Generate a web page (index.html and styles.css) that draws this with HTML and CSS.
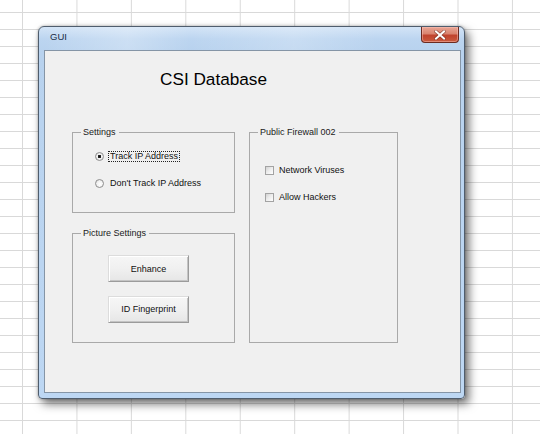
FILE: index.html
```html
<!DOCTYPE html>
<html>
<head>
<meta charset="utf-8">
<link rel="stylesheet" href="styles.css">
</head>
<body>
<div class="window">
  <div class="titlebar">
    <span class="title">GUI</span>
    <span class="close">
      <svg width="12" height="10" viewBox="0 0 12 10">
        <path d="M2 1.5 L10 8.5 M10 1.5 L2 8.5" stroke="#5a1d14" stroke-width="3.4" stroke-linecap="square" fill="none" opacity="0.55"/>
        <path d="M2 1.5 L10 8.5 M10 1.5 L2 8.5" stroke="#ffffff" stroke-width="2" stroke-linecap="square" fill="none"/>
      </svg>
    </span>
  </div>
  <div class="panel">
    <h1 class="heading">CSI Database</h1>
    <div class="groups">
      <fieldset class="group settings">
        <legend>Settings</legend>
        <label class="option first">
          <input type="radio" name="track" class="radio" checked>
          <span class="text focused">Track IP Address</span>
        </label>
        <label class="option second">
          <input type="radio" name="track" class="radio">
          <span class="text">Don't Track IP Address</span>
        </label>
      </fieldset>
      <fieldset class="group firewall">
        <legend>Public Firewall 002</legend>
        <label class="check first">
          <input type="checkbox" class="box">
          <span class="ctext">Network Viruses</span>
        </label>
        <label class="check second">
          <input type="checkbox" class="box">
          <span class="ctext">Allow Hackers</span>
        </label>
      </fieldset>
      <fieldset class="group picture">
        <legend>Picture Settings</legend>
        <button class="btn first">Enhance</button>
        <button class="btn second">ID Fingerprint</button>
      </fieldset>
    </div>
  </div>
</div>
</body>
</html>
```

FILE: styles.css
```css
html, body {
  margin: 0;
  padding: 0;
}
body {
  width: 540px;
  height: 434px;
  overflow: hidden;
  background-color: #ffffff;
  background-image:
    linear-gradient(to right, #d9d9d9 1px, transparent 1px),
    linear-gradient(to bottom, #d9d9d9 1px, transparent 1px);
  background-size: 54.44px 17px;
  background-position: 22px 12px;
  font-family: "Liberation Sans", Arial, sans-serif;
  color: #111;
}
.window {
  margin: 26px 0 0 38px;
  width: 427px;
  height: 373px;
  box-sizing: border-box;
  border: 1px solid #4f5d6d;
  border-radius: 6px 6px 4px 4px;
  padding: 0 3px 5px 5px;
  display: flex;
  flex-direction: column;
  background: linear-gradient(to bottom, #d3e4f6 0px, #bcd5f0 12px, #b8d2ee 24px, #bdd7f3 100%);
  box-shadow: 4px 5px 10px rgba(0, 0, 0, 0.55), 0 0 3px rgba(0, 0, 0, 0.3);
}
.titlebar {
  height: 23px;
  display: flex;
  align-items: flex-start;
  background: linear-gradient(to right, rgba(255,255,255,0) 0%, rgba(255,255,255,0.25) 20%, rgba(255,255,255,0) 35%, rgba(255,255,255,0.2) 60%, rgba(255,255,255,0) 80%);
}
.title {
  font-size: 9.5px;
  line-height: 12px;
  margin: 4px 0 0 6px;
  color: #1b2b44;
}
.close {
  margin-left: auto;
  margin-right: 2px;
  margin-top: 0;
  width: 38px;
  height: 16px;
  box-sizing: border-box;
  border: 1px solid #6b2a20;
  border-top: none;
  border-radius: 0 0 4px 4px;
  background: linear-gradient(to bottom, #e9a594 0%, #d98470 45%, #c0432e 55%, #c95a3e 100%);
  box-shadow: inset 0 0 0 1px rgba(255, 200, 190, 0.45);
  display: flex;
  align-items: center;
  justify-content: center;
}
.panel {
  flex: 1;
  border: 1px solid #8595a6;
  background: #f0f0f0;
  display: flex;
  flex-direction: column;
}
.heading {
  margin: 18px 0 0 115px;
  font-size: 17.2px;
  line-height: 20px;
  font-weight: normal;
  color: #000;
}
.groups {
  margin: 38px 0 0 27px;
  display: grid;
  grid-template-columns: 163px 149px;
  grid-template-rows: 86px 115px;
  column-gap: 14px;
  row-gap: 15px;
}
.group {
  margin: 0;
  min-width: 0;
  padding: 0 0 0 8px;
  border: 1px solid #a9a9a9;
  display: flex;
  flex-direction: column;
  align-items: flex-start;
}
.group legend {
  font-size: 9px;
  line-height: 11px;
  padding: 0 3px 0 2px;
  color: #1a1a1a;
}
.settings {
  grid-column: 1;
  grid-row: 1;
}
.picture {
  grid-column: 1;
  grid-row: 2;
}
.firewall {
  grid-column: 2;
  grid-row: 1 / span 2;
}
.option, .check {
  display: flex;
  align-items: center;
  height: 11px;
  font-size: 9px;
}
.option.first { margin-top: 12.5px; }
.option.second { margin-top: 16.3px; }
.check.first { margin-top: 26.5px; }
.check.second { margin-top: 16px; }
.radio {
  appearance: none;
  -webkit-appearance: none;
  margin: 0 0 0 14px;
  width: 9px;
  height: 9px;
  box-sizing: border-box;
  border: 1px solid #8e8e8e;
  border-radius: 50%;
  background: radial-gradient(circle at 60% 60%, #ffffff 0, #f2f2f2 50%, #d6d6d6 100%);
}
.radio:checked {
  background: radial-gradient(circle at 50% 50%, #111 0, #222 1.4px, #f4f4f4 1.9px, #dcdcdc 100%);
}
.text {
  margin-left: 4px;
  padding: 0 1px;
  line-height: 9px;
  border: 1px solid transparent;
  white-space: nowrap;
}
.text.focused {
  border: 1px dotted #222;
}
.box {
  appearance: none;
  -webkit-appearance: none;
  margin: 0 0 0 7.4px;
  width: 9px;
  height: 9px;
  box-sizing: border-box;
  border: 1px solid #a3a3a3;
  background: linear-gradient(135deg, #d2d2d2 0%, #ececec 45%, #ffffff 100%);
}
.ctext {
  margin-left: 4.6px;
  line-height: 11px;
  white-space: nowrap;
}
.btn {
  margin: 0 0 0 27px;
  width: 81px;
  height: 27px;
  box-sizing: border-box;
  padding: 0;
  font-family: "Liberation Sans", Arial, sans-serif;
  font-size: 9px;
  color: #111;
  border: 1px solid;
  border-color: #dcdcdc #9b9b9b #9b9b9b #dcdcdc;
  box-shadow: inset 1px 1px 0 #ffffff, inset -1px -1px 0 #c4c4c4;
  background: linear-gradient(to bottom, #f6f6f6 0%, #f0f0f0 50%, #e6e6e6 100%);
}
.btn.first { margin-top: 16px; }
.btn.second { margin-top: 13.7px; }
```
